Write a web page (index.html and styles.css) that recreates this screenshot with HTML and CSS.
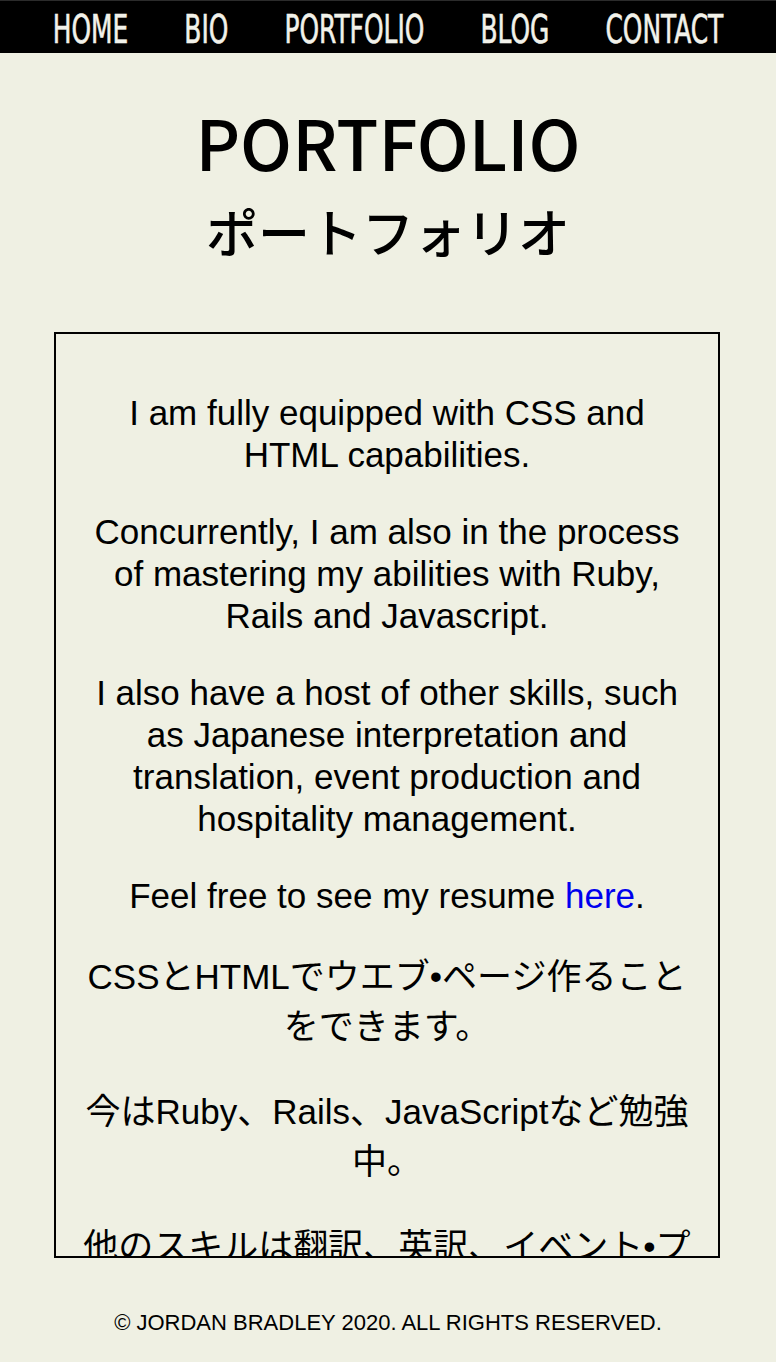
FILE: index.html
```html
<!DOCTYPE html>
<html lang="en">
<head>
<meta charset="utf-8">
<title>Portfolio</title>
<link rel="stylesheet" href="styles.css">
</head>
<body>
<nav class="topnav">
  <ul class="nav-list">
    <li><a class="nav-link" href="#">HOME</a></li>
    <li><a class="nav-link" href="#">BIO</a></li>
    <li><a class="nav-link" href="#">PORTFOLIO</a></li>
    <li><a class="nav-link" href="#">BLOG</a></li>
    <li><a class="nav-link" href="#">CONTACT</a></li>
  </ul>
</nav>
<header class="page-head">
  <h1 class="title">PORTFOLIO</h1>
  <h2 class="subtitle">ポートフォリオ</h2>
</header>
<main class="content">
  <section class="about-box">
    <p class="en">I am fully equipped with CSS and HTML capabilities.</p>
    <p class="en">Concurrently, I am also in the process of mastering my abilities with Ruby, Rails and Javascript.</p>
    <p class="en">I also have a host of other skills, such as Japanese interpretation and translation, event production and hospitality management.</p>
    <p class="en">Feel free to see my resume <a class="inline-link" href="#">here</a>.</p>
    <p class="jp">CSSとHTMLでウエブ•ページ作ることをできます。</p>
    <p class="jp">今はRuby、Rails、JavaScriptなど勉強中。</p>
    <p class="jp">他のスキルは翻訳、英訳、イベント•プロデュース、ホスピタリティ•マネジメントなどです。</p>
  </section>
</main>
<footer class="site-footer">
  <p class="copyright">© JORDAN BRADLEY 2020. ALL RIGHTS RESERVED.</p>
</footer>
</body>
</html>
```
FILE: styles.css
```css
html, body {
  margin: 0;
  padding: 0;
}
body {
  background: #eff0e3;
  color: #000;
  font-family: "Liberation Sans", Arial, sans-serif;
}
.topnav {
  background: #000;
  border-top: 1px solid #2b2b2b;
  height: 52px;
  overflow: hidden;
}
.nav-list {
  list-style: none;
  margin: 0;
  padding: 3px 0 0;
  display: flex;
  justify-content: center;
  gap: 79px;
  transform: scaleX(0.71);
  transform-origin: 50% 50%;
}
.nav-link {
  display: block;
  color: #f2f2ea;
  text-decoration: none;
  font-family: "DejaVu Sans Condensed", "Liberation Sans", sans-serif;
  font-size: 39px;
  line-height: 52px;
  -webkit-text-stroke: 0.6px #f2f2ea;
}
.page-head {
  text-align: center;
  padding-top: 51px;
}
.title {
  margin: 0;
  font-family: "Noto Sans CJK JP", "Noto Sans", sans-serif;
  font-weight: 500;
  font-size: 69px;
  line-height: 74px;
}
.subtitle {
  margin: 27px 0 0;
  font-family: "Noto Sans CJK JP", sans-serif;
  font-weight: 500;
  font-size: 52px;
  line-height: 52px;
}
.content {
  padding-top: 75px;
}
.about-box {
  box-sizing: border-box;
  width: 666px;
  height: 926px;
  margin: 0 0 0 54px;
  border: 2px solid #000;
  padding: 23px 25px 0;
  overflow: hidden;
  text-align: center;
  font-size: 35px;
}
.about-box p {
  margin: 35px 0;
}
.en {
  line-height: 42px;
}
.jp {
  font-family: "Liberation Sans", "Noto Sans CJK JP", sans-serif;
  line-height: 50px;
}
.jp:first-of-type {
  margin-top: 37px;
}
.inline-link {
  color: #0000ee;
  text-decoration: none;
}
.site-footer {
  text-align: center;
  padding-top: 52px;
}
.copyright {
  margin: 0;
  font-size: 22px;
  line-height: 26px;
}
```
